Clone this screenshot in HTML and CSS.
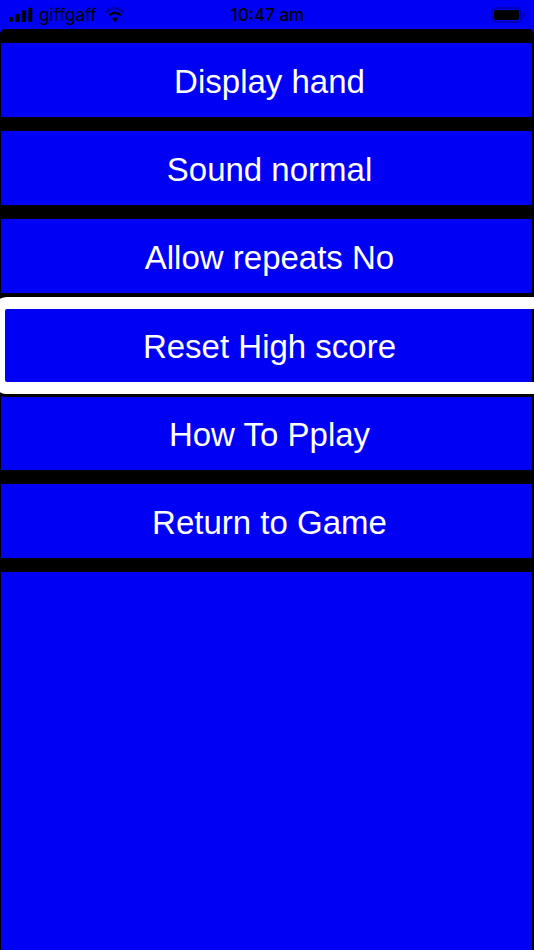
FILE: index.html
```html
<!DOCTYPE html>
<html lang="en">
<head>
<meta charset="utf-8">
<meta name="viewport" content="width=device-width, initial-scale=1">
<title>Options</title>
<link rel="stylesheet" href="styles.css">
</head>
<body>
<header class="status">
  <div class="carrier">
    <svg class="signal" viewBox="0 0 24 16" aria-hidden="true">
      <rect x="0" y="10" width="4" height="5" rx="1"/>
      <rect x="6.5" y="7" width="4" height="8" rx="1"/>
      <rect x="13" y="3.5" width="4" height="11.5" rx="1"/>
      <rect x="19.3" y="0.8" width="4" height="14.2" rx="1"/>
    </svg>
    <span>giffgaff</span>
    <svg class="wifi" viewBox="0 0 20 16" aria-hidden="true">
      <path class="faint" d="M1 5.2Q10 -2.8 19 5.2" fill="none" stroke-width="2.6"/>
      <path d="M4.2 8.4Q10 3.2 15.8 8.4" fill="none" stroke="#000" stroke-width="2.5"/>
      <path d="M7 12Q10 9.2 13 12L10 15Z"/>
    </svg>
  </div>
  <time class="clock">10:47 am</time>
  <svg class="battery" viewBox="0 0 35 16" aria-hidden="true">
    <rect class="faint" x="1" y="1" width="29" height="14" rx="4" fill="none" stroke-width="1.4"/>
    <rect x="3" y="3" width="25" height="10" rx="2"/>
    <path class="cap" d="M32 5.5Q34 6 34 8T32 10.5Z"/>
  </svg>
</header>
<main class="screen">
  <nav class="menu" aria-label="Options">
    <button class="item" type="button">Display hand</button>
    <button class="item" type="button">Sound normal</button>
    <button class="item" type="button">Allow repeats No</button>
    <button class="item selected" type="button">Reset High score</button>
    <button class="item" type="button">How To Pplay</button>
    <button class="item" type="button">Return to Game</button>
  </nav>
  <div class="rest"></div>
</main>
</body>
</html>
```
FILE: styles.css
```css
* {
  box-sizing: border-box;
}

body {
  display: flex;
  flex-direction: column;
  min-height: 100vh;
  margin: 0;
  overflow-x: hidden;
  background: #0000f5;
  font-family: Inter, "Liberation Sans", sans-serif;
}

.status {
  display: grid;
  grid-template-columns: 1fr auto 1fr;
  align-items: center;
  height: 29px;
  padding: 0 8px 0 9px;
  color: #000;
  font-size: 17px;
}

.carrier {
  display: flex;
  align-items: center;
  gap: 6px;
}

.signal {
  width: 24px;
  height: 16px;
}

.wifi {
  width: 20px;
  height: 16px;
  margin-left: 2px;
}

.battery {
  justify-self: end;
  width: 35px;
  height: 16px;
}

.faint {
  stroke: #0000a8;
}

.cap {
  fill: #0000a8;
}

.clock {
  font-weight: 500;
}

.screen {
  display: flex;
  flex: 1;
  flex-direction: column;
  gap: 14px;
  padding: 14px 2px 0 1px;
  border-radius: 5px 5px 0 0;
  background: #000;
}

.menu {
  display: flex;
  flex-direction: column;
  gap: 14px;
}

.item {
  position: relative;
  height: 74px;
  padding: 4px 0 0 6px;
  border: 0;
  background: #0000f5;
  color: #fff;
  font-family: "Liberation Sans", Arial, sans-serif;
  font-size: 33px;
  line-height: 40px;
}

.selected {
  height: 75px;
  z-index: 1;
}

/* Selection ring, wider than the screen on the right */
.selected::after {
  content: "";
  position: absolute;
  inset: -10px -20px -12px -8px;
  border: 12px solid #fff;
  border-radius: 14px;
  box-shadow: 0 0 0 3px #000;
}

.rest {
  flex: 1;
  background: #0000f5;
}
```
